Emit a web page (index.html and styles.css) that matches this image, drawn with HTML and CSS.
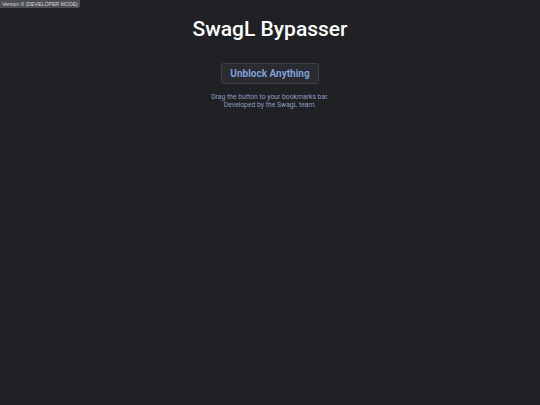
FILE: index.html
```html
<!DOCTYPE html>
<html>
<head>
<meta charset="utf-8">
<link rel="stylesheet" href="styles.css">
</head>
<body>
<div class="version">Version X (DEVELOPER MODE)</div>
<main class="main">
  <h1 class="title">SwagL Bypasser</h1>
  <a class="btn" href="#">Unblock Anything</a>
  <p class="note">Drag the button to your bookmarks bar.<br>Developed by the SwagL team.</p>
</main>
</body>
</html>
```
FILE: styles.css
```css
html, body {
  margin: 0;
  padding: 0;
  background: #202124;
  height: 100%;
}
body {
  font-family: Roboto, "Liberation Sans", sans-serif;
  color: #fff;
}
.version {
  position: absolute;
  top: 0;
  left: 0;
  background: #4b4d52;
  color: #d8d8d8;
  font-family: "Liberation Sans", Arial, sans-serif;
  font-size: 5.2px;
  line-height: 8px;
  padding: 0 2px;
  border-bottom-right-radius: 2px;
}
.main {
  display: flex;
  flex-direction: column;
  align-items: center;
  padding-top: 15px;
}
.title {
  margin: 0;
  font-size: 21px;
  font-weight: 500;
  line-height: 28px;
  color: #fff;
}
.btn {
  margin-top: 20px;
  display: block;
  padding: 3px 8px;
  font-size: 10px;
  line-height: 13px;
  font-weight: 700;
  color: #7f9fd6;
  text-decoration: none;
  background: #292b30;
  border: 1px solid #3d4046;
  border-radius: 3px;
}
.note {
  margin: 9px 0 0 0;
  font-size: 6.8px;
  line-height: 8px;
  color: #8c9fc0;
  text-align: center;
}
```
